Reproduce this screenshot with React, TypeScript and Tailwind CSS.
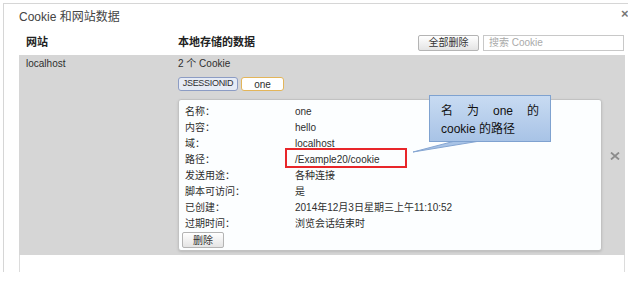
import React from "react";

const rows: [string, string][] = [
  ["名称：", "one"],
  ["内容：", "hello"],
  ["域：", "localhost"],
  ["路径：", "/Example20/cookie"],
  ["发送用途：", "各种连接"],
  ["脚本可访问：", "是"],
  ["已创建：", "2014年12月3日星期三上午11:10:52"],
  ["过期时间：", "浏览会话结束时"],
];

function App() {
  const font = { fontFamily: '"Liberation Sans", "Noto Sans CJK SC", sans-serif' };
  const btn =
    "flex items-center justify-center h-[16px] border border-[#b4b4b4] rounded-[2px] bg-gradient-to-b from-white to-[#e4e4e4] text-[10px] text-[#333]";

  return (
    <div className="relative w-[628px] h-[282px] overflow-hidden bg-white text-[#2e2e2e]" style={font}>
      <div className="mt-[3px] ml-[3px] h-[269px] border-l border-t border-[#d6d6d6] flex flex-col">
        {/* Title */}
        <div className="h-[26px] flex items-center pl-[15px] text-[12px] text-[#444]">Cookie 和网站数据</div>

        {/* Header */}
        <div className="h-[25px] ml-[15px] w-[606px] flex items-center">
          <div className="w-[159px] pl-[7px] text-[11px] font-bold text-[#222]">网站</div>
          <div className="flex-1 text-[11px] font-bold text-[#222]">本地存储的数据</div>
          <div className={btn + " w-[61px]"}>全部删除</div>
          <div className="ml-[4px] mr-[1px] w-[141px] h-[16px] border border-[#c8c8c8] bg-white flex items-center pl-[5px] text-[10px] text-[#aaa]">
            搜索 Cookie
          </div>
        </div>

        {/* List */}
        <div className="ml-[15px] w-[606px] flex flex-col">
          <div className="h-[200px] bg-[#d6d6d6] flex">
            <div className="w-[159px] pl-[7px] pt-[1px] text-[10px] leading-[16px]">localhost</div>
            <div className="w-[424px] flex flex-col">
              <div className="pt-[1px] h-[17px] text-[10px] leading-[16px]">2 个 Cookie</div>
              <div className="mt-[5px] flex gap-[3px]">
                <div className="w-[60px] h-[14px] border border-[#8c9cc4] bg-[#e6ebf5] rounded-[3px] text-[9px] tracking-[-0.3px] flex items-center justify-center">
                  JSESSIONID
                </div>
                <div className="w-[43px] h-[14px] border border-[#e3b55a] bg-white rounded-[3px] text-[10px] flex items-center justify-center">
                  one
                </div>
              </div>
              <div className="mt-[8px] h-[152px] border border-[#c2c2c2] rounded-[3px] bg-[#fcfeff] shadow-sm pl-[6px] pt-[3px] flex flex-col">
                {rows.map(([k, v]) => (
                  <div key={k} className="h-[16px] flex items-center text-[10px]">
                    <div className="w-[110px]">{k}</div>
                    <div>{v}</div>
                  </div>
                ))}
                <div className={btn + " w-[42px] mt-[1px] -ml-[3px]"}>删除</div>
              </div>
            </div>
            <div className="flex-1">
              <svg className="mt-[97px] ml-[8px]" width="10" height="8" viewBox="0 0 10 8">
                <path d="M1 0.5 L9 7.5 M9 0.5 L1 7.5" stroke="#8c8c8c" strokeWidth="1.8" />
              </svg>
            </div>
          </div>
          <div className="h-[17px] border-x border-[#dcdcdc]" />
        </div>
      </div>

      {/* dialog close, cut off at the edge */}
      <div className="absolute left-[621px] top-[4px] text-[13px] font-bold text-[#777]">×</div>

      {/* Annotation: red box around path */}
      <div className="absolute left-[285px] top-[148px] w-[122px] h-[20px] border-2 border-[#e8262a]" />

      {/* Annotation: callout */}
      <svg className="absolute left-[412px] top-[140px]" width="72" height="14" viewBox="0 0 72 14">
        <polygon points="43,1 68,1 1,12" fill="#a8c3e6" />
        <path d="M43 1 L1 12 L68 1" fill="none" stroke="#86a6d2" strokeWidth="1" />
      </svg>
      <div className="absolute left-[429px] top-[95px] w-[122px] h-[47px] border border-[#7fa2d0] bg-gradient-to-b from-[#c8dbf2] to-[#a8c3e6] px-[11px] pt-[6px] text-[12px] leading-[18px] text-[#111]">
        <div className="flex justify-between">
          <span>名</span>
          <span>为</span>
          <span>one</span>
          <span>的</span>
        </div>
        <div>cookie 的路径</div>
      </div>
    </div>
  );
}

export default App;
